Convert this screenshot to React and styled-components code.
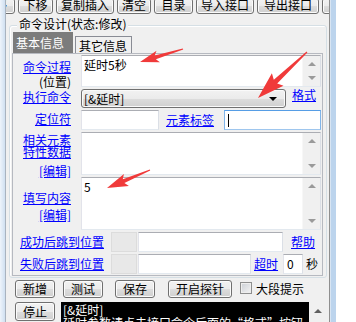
import React from "react";
import styled, { createGlobalStyle } from "styled-components";

const GlobalStyle = createGlobalStyle`
  html, body {
    margin: 0;
    padding: 0;
    background: #ffffff;
  }
  body {
    font-family: "Noto Sans CJK SC", "Liberation Sans", sans-serif;
    font-size: 12px;
    color: #000;
  }
`;

// red arrow polygon from tail (x1,y1) to tip (x2,y2)
const arrowPoints = (x1, y1, x2, y2, headLen, headW, neck) => {
  const dx = x2 - x1;
  const dy = y2 - y1;
  const len = Math.hypot(dx, dy);
  const ux = dx / len;
  const uy = dy / len;
  const nx = -uy;
  const ny = ux;
  const bx = x2 - ux * headLen;
  const by = y2 - uy * headLen;
  const at = (x, y, w, back = 0) => [x + nx * w - ux * back, y + ny * w - uy * back];
  const pts = [
    at(x1, y1, 0.6),
    at(bx, by, neck / 2),
    at(bx, by, headW / 2, 3),
    [x2, y2],
    at(bx, by, -headW / 2, 3),
    at(bx, by, -neck / 2),
    at(x1, y1, -0.6),
  ];
  return pts.map(([x, y]) => `${x.toFixed(1)},${y.toFixed(1)}`).join(" ");
};

const arrows = [
  [183, 49, 140, 62, 16, 12, 4],
  [307, 52, 258, 98, 24, 17, 5],
  [150, 170, 107, 188, 18, 13, 4],
];

const App = () => {
  return (
    <>
      <GlobalStyle />
      <Screen>
        <FrameLeft />
        <Main>
          <Toolbar>
            <ToolButton $w={40} $ml={-31}>上移</ToolButton>
            <ToolButton $w={35}>下移</ToolButton>
            <ToolButton $w={58}>复制插入</ToolButton>
            <ToolButton $w={34}>清空</ToolButton>
            <ToolButton $w={39}>目录</ToolButton>
            <ToolButton $w={58}>导入接口</ToolButton>
            <ToolButton $w={62}>导出接口</ToolButton>
            <ToolButton $w={40}>帮助</ToolButton>
          </Toolbar>

          <GroupBox>
            <Legend>命令设计(状态:修改)</Legend>
            <Tabs>
              <Tab $active>基本信息</Tab>
              <Tab>其它信息</Tab>
            </Tabs>
            <Panel>
              <Row $h={32}>
                <LabelCell $pt={6}>
                  <Link>命令过程</Link>
                  <Plain $mt={3}>(位置)</Plain>
                </LabelCell>
                <TextBox>
                  <TextArea>延时5秒</TextArea>
                  <ScrollBar />
                </TextBox>
              </Row>

              <Row $h={19}>
                <LabelCell $pt={2}>
                  <Link>执行命令</Link>
                </LabelCell>
                <Combo>
                  <span>[&延时]</span>
                  <ComboArrow />
                </Combo>
                <Link $ml={6}>格式</Link>
              </Row>

              <Row $h={20}>
                <LabelCell $pt={3}>
                  <Link>定位符</Link>
                </LabelCell>
                <Input $w={78} />
                <Link $ml={7} $center>元素标签</Link>
                <Input $w={97} $ml={10} $focus>
                  <Caret />
                </Input>
              </Row>

              <Row $h={43}>
                <LabelCell $pt={2}>
                  <Link>相关元素</Link>
                  <Link>特性数据</Link>
                  <Link $mt={7}>[编辑]</Link>
                </LabelCell>
                <TextBox>
                  <TextArea />
                  <ScrollBar />
                </TextBox>
              </Row>

              <Row $h={53}>
                <LabelCell $pt={15}>
                  <Link>填写内容</Link>
                  <Link $mt={5}>[编辑]</Link>
                </LabelCell>
                <TextBox>
                  <TextArea>5</TextArea>
                  <ScrollBar />
                </TextBox>
              </Row>

              <JumpRow>
                <Link $center>成功后跳到位置</Link>
                <GreyCell />
                <Input $w={145} $ml={1} />
                <Link $ml={8} $center>帮助</Link>
              </JumpRow>

              <JumpRow>
                <Link $center>失败后跳到位置</Link>
                <GreyCell />
                <Input $w={113} $ml={1} />
                <Link $ml={3} $center>超时</Link>
                <Input $w={20} $ml={5}>
                  <InputText>0</InputText>
                </Input>
                <Plain $ml={3} $center>秒</Plain>
              </JumpRow>
            </Panel>
          </GroupBox>

          <ButtonRow $mt={2}>
            <Button $w={40}>新增</Button>
            <Button $w={40} $ml={8}>测试</Button>
            <Button $w={40} $ml={12}>保存</Button>
            <Button $w={64} $ml={13}>开启探针</Button>
            <CheckBox />
            <Plain $ml={4} $center>大段提示</Plain>
          </ButtonRow>

          <ButtonRow $mt={4}>
            <Button $w={40} $h={19}>停止</Button>
            <Console>
              <ConsoleText>
                <div>[&延时]</div>
                <div>延时参数请点击接口命令后面的“格式”按钮</div>
              </ConsoleText>
              <ConsoleScroll>
                <UpTri />
              </ConsoleScroll>
            </Console>
          </ButtonRow>
        </Main>
        <FrameRight />

        <Overlay width="356" height="322" viewBox="0 0 356 322">
          {arrows.map((a, i) => (
            <polygon key={i} points={arrowPoints(...a)} fill="#f03a3a" />
          ))}
        </Overlay>
      </Screen>
    </>
  );
};

export default App;

// window frame
const Screen = styled.div`
  position: relative;
  width: 356px;
  height: 322px;
  overflow: hidden;
  display: flex;
  background: #ffffff;
`;

const FrameLeft = styled.div`
  flex: none;
  width: 5px;
  background: linear-gradient(to right, #eef4fb, #d0e0f1);
`;

const FrameRight = styled.div`
  flex: none;
  width: 6px;
  background: #bcd4ed;
  border-left: 1px solid #d8e5f3;
  box-sizing: border-box;
`;

const Main = styled.div`
  flex: none;
  width: 325px;
  box-sizing: border-box;
  background: #f0f0f0;
  border-left: 1px solid #a9b3bf;
  border-right: 1px solid #8f8f8f;
  display: flex;
  flex-direction: column;
`;

// toolbar at top (scrolled, cut off)
const Toolbar = styled.div`
  height: 14px;
  flex: none;
  display: flex;
  align-items: flex-end;
  gap: 3px;
  overflow: hidden;
`;

const ToolButton = styled.div`
  flex: none;
  width: ${(p) => p.$w}px;
  margin-left: ${(p) => p.$ml || 0}px;
  height: 16px;
  box-sizing: border-box;
  border: 1px solid #707070;
  border-radius: 3px;
  background: linear-gradient(#f2f2f2 0%, #ebebeb 50%, #dddddd 51%, #cfcfcf 100%);
  box-shadow: inset 0 0 0 1px #fbfbfb;
  text-align: center;
  line-height: 12px;
  white-space: nowrap;
`;

// group box
const GroupBox = styled.div`
  margin: 11px 2px 0 3px;
  padding: 0 3px 1px 2px;
  border: 1px solid #d5dfe5;
  border-radius: 3px;
  box-shadow: inset 1px 1px 0 #ffffff;
  display: flex;
  flex-direction: column;
`;

const Legend = styled.div`
  align-self: flex-start;
  margin: -9px 0 0 5px;
  padding: 0 2px;
  background: #f0f0f0;
  line-height: 14px;
  white-space: nowrap;
`;

const Tabs = styled.div`
  display: flex;
  align-items: flex-end;
  height: 22px;
  margin-top: 0;
  padding-left: 1px;
`;

const Tab = styled.div`
  box-sizing: border-box;
  height: ${(p) => (p.$active ? 21 : 17)}px;
  width: ${(p) => (p.$active ? 60 : 57)}px;
  margin-left: ${(p) => (p.$active ? 0 : 2)}px;
  padding: ${(p) => (p.$active ? "3px 0 0 2px" : "2px 0 0 3px")};
  background: ${(p) => (p.$active ? "#7c7c7c" : "#f0f0f0")};
  color: ${(p) => (p.$active ? "#ffffff" : "#000000")};
  border: 1px solid ${(p) => (p.$active ? "#7c7c7c" : "#898c95")};
  border-bottom: none;
  line-height: 13px;
  white-space: nowrap;
`;

const Panel = styled.div`
  width: 311px;
  box-sizing: border-box;
  border: 1px solid #b6b9c0;
  padding: 1px 1px 1px 0;
  display: flex;
  flex-direction: column;
  gap: 2px;
`;

const Row = styled.div`
  display: flex;
  align-items: flex-start;
  height: ${(p) => p.$h}px;
`;

const LabelCell = styled.div`
  flex: none;
  width: 68px;
  box-sizing: border-box;
  padding: ${(p) => p.$pt}px 10px 0 0;
  display: flex;
  flex-direction: column;
  align-items: flex-end;
`;

const Link = styled.span`
  color: #0000ff;
  text-decoration: underline;
  text-underline-offset: 1px;
  line-height: 12px;
  white-space: nowrap;
  margin-top: ${(p) => p.$mt || 0}px;
  margin-left: ${(p) => p.$ml || 0}px;
  align-self: ${(p) => (p.$center ? "center" : "auto")};
`;

const Plain = styled.span`
  line-height: 12px;
  white-space: nowrap;
  margin-top: ${(p) => p.$mt || 0}px;
  margin-left: ${(p) => p.$ml || 0}px;
  align-self: ${(p) => (p.$center ? "center" : "auto")};
`;

// text boxes
const TextBox = styled.div`
  flex: 1;
  height: 100%;
  box-sizing: border-box;
  border: 1px solid #abadb3;
  border-color: #abadb3 #dbdfe6 #e3e9ef #e2e3ea;
  background: #ffffff;
  display: flex;
`;

const TextArea = styled.div`
  flex: 1;
  padding: 2px 2px;
  line-height: 13px;
`;

const ScrollBar = styled.div`
  flex: none;
  width: 17px;
  background: #f0f0f0;
  border-left: 1px solid #f7f7f7;
  position: relative;

  &::before,
  &::after {
    content: "";
    position: absolute;
    left: 5px;
    border-left: 4px solid transparent;
    border-right: 4px solid transparent;
  }
  &::before {
    top: 6px;
    border-bottom: 4px solid #9a9a9a;
  }
  &::after {
    bottom: 6px;
    border-top: 4px solid #9a9a9a;
  }
`;

const Combo = styled.div`
  width: 205px;
  height: 19px;
  box-sizing: border-box;
  border: 1px solid #707070;
  border-radius: 3px;
  background: linear-gradient(#f2f2f2 0%, #ebebeb 50%, #dddddd 51%, #cfcfcf 100%);
  box-shadow: inset 0 0 0 1px #fafafa;
  display: flex;
  align-items: center;
  justify-content: space-between;
  padding: 0 8px 0 2px;
  line-height: 12px;
`;

const ComboArrow = styled.span`
  width: 0;
  height: 0;
  border-left: 4px solid transparent;
  border-right: 4px solid transparent;
  border-top: 4px solid #000;
`;

const Input = styled.div`
  flex: none;
  width: ${(p) => p.$w}px;
  height: 20px;
  margin-left: ${(p) => p.$ml || 0}px;
  box-sizing: border-box;
  border: 1px solid;
  border-color: ${(p) =>
    p.$focus ? "#569de5 #80b5ea #9ec6ee #80b5ea" : "#abadb3 #dbdfe6 #e3e9ef #e2e3ea"};
  background: #ffffff;
  display: flex;
  align-items: center;
  padding-left: 3px;
`;

const Caret = styled.span`
  width: 1px;
  height: 13px;
  background: #000;
`;

const InputText = styled.span`
  line-height: 12px;
`;

const JumpRow = styled.div`
  display: flex;
  align-items: stretch;
  height: 20px;
  padding-left: 7px;
`;

const GreyCell = styled.div`
  flex: none;
  width: 26px;
  margin-left: 7px;
  box-sizing: border-box;
  border: 1px solid #dcdcdc;
  background: #e8e8e8;
`;

// bottom buttons
const ButtonRow = styled.div`
  display: flex;
  align-items: flex-start;
  margin-top: ${(p) => p.$mt}px;
  padding-left: 9px;
`;

const Button = styled.div`
  flex: none;
  width: ${(p) => p.$w}px;
  height: ${(p) => p.$h || 18}px;
  margin-left: ${(p) => p.$ml || 0}px;
  box-sizing: border-box;
  border: 1px solid #707070;
  border-radius: 3px;
  background: linear-gradient(#f2f2f2 0%, #ebebeb 50%, #dddddd 51%, #cfcfcf 100%);
  box-shadow: inset 0 0 0 1px #fbfbfb;
  display: flex;
  align-items: center;
  justify-content: center;
  line-height: 12px;
  white-space: nowrap;
`;

const CheckBox = styled.div`
  flex: none;
  width: 12px;
  height: 12px;
  margin: 2px 0 0 8px;
  box-sizing: border-box;
  border: 1px solid #8e8f8f;
  background: linear-gradient(135deg, #cbcfd5, #f4f4f4);
  box-shadow: inset 0 0 0 1px #eeeeee;
`;

const Console = styled.div`
  flex: 1;
  margin: 0 2px 0 6px;
  height: 24px;
  background: #000000;
  display: flex;
`;

const ConsoleText = styled.div`
  flex: 1;
  color: #ffffff;
  line-height: 13px;
  padding: 1px 0 0 2px;
  white-space: nowrap;
  overflow: hidden;
`;

const ConsoleScroll = styled.div`
  flex: none;
  width: 18px;
  background: #f0f0f0;
  display: flex;
  justify-content: center;
  padding-top: 7px;
  box-sizing: border-box;
`;

const UpTri = styled.span`
  width: 0;
  height: 0;
  border-left: 4px solid transparent;
  border-right: 4px solid transparent;
  border-bottom: 4px solid #606060;
`;

const Overlay = styled.svg`
  position: absolute;
  left: 0;
  top: 0;
  pointer-events: none;
`;
